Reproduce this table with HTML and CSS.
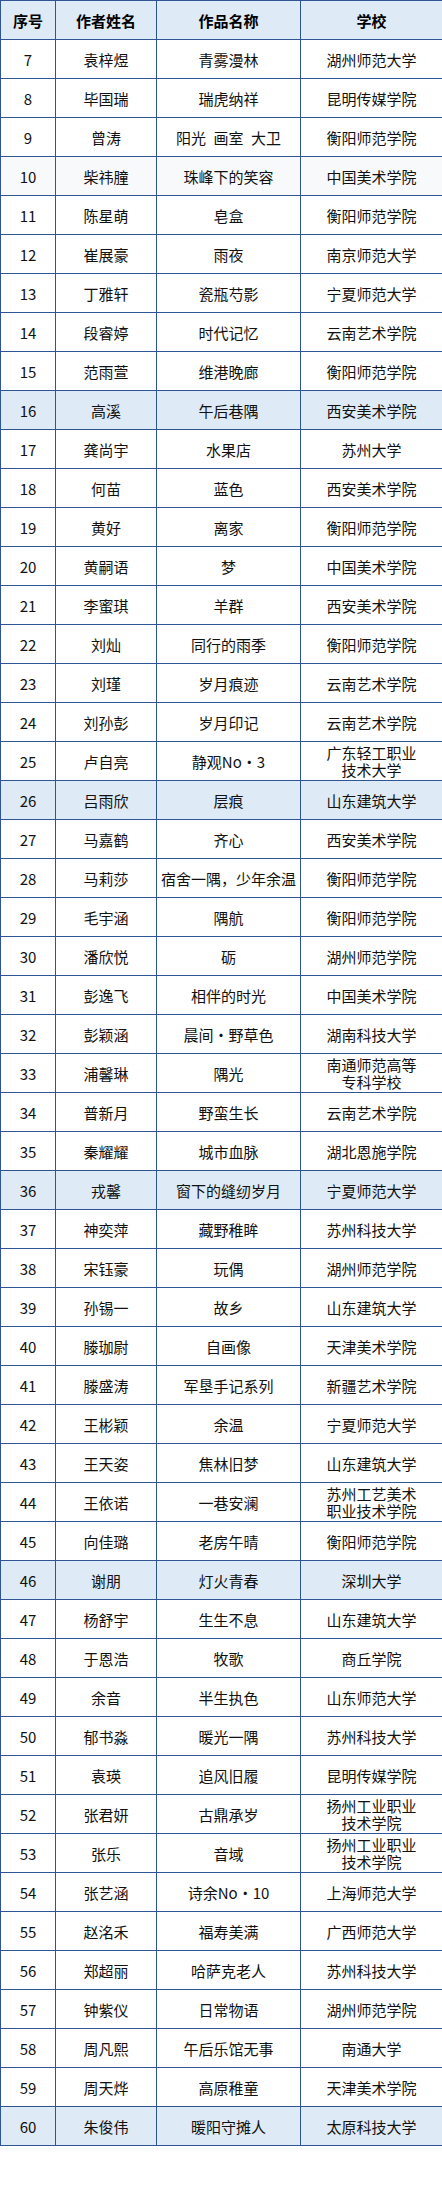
FILE: index.html
```html
<!DOCTYPE html>
<html lang="zh-CN">
<head>
<meta charset="utf-8">
<link rel="stylesheet" href="styles.css">
</head>
<body>
<table class="list">
<colgroup>
<col class="c-no"><col class="c-name"><col class="c-work"><col class="c-school">
</colgroup>
<thead>
<tr class="head"><th>序号</th><th>作者姓名</th><th>作品名称</th><th>学校</th></tr>
</thead>
<tbody>
<tr><td>7</td><td>袁梓煜</td><td>青雾漫林</td><td class="sc">湖州师范大学</td></tr>
<tr><td>8</td><td>毕国瑞</td><td>瑞虎纳祥</td><td class="sc">昆明传媒学院</td></tr>
<tr><td>9</td><td>曾涛</td><td>阳光&ensp;画室&ensp;大卫</td><td class="sc">衡阳师范学院</td></tr>
<tr class="soft"><td>10</td><td>柴祎朣</td><td>珠峰下的笑容</td><td class="sc">中国美术学院</td></tr>
<tr><td>11</td><td>陈星萌</td><td>皂盒</td><td class="sc">衡阳师范学院</td></tr>
<tr><td>12</td><td>崔展豪</td><td>雨夜</td><td class="sc">南京师范大学</td></tr>
<tr><td>13</td><td>丁雅轩</td><td>瓷瓶芍影</td><td class="sc">宁夏师范大学</td></tr>
<tr><td>14</td><td>段睿婷</td><td>时代记忆</td><td class="sc">云南艺术学院</td></tr>
<tr><td>15</td><td>范雨萱</td><td>维港晚廊</td><td class="sc">衡阳师范学院</td></tr>
<tr class="hl"><td>16</td><td>高溪</td><td>午后巷隅</td><td class="sc">西安美术学院</td></tr>
<tr><td>17</td><td>龚尚宇</td><td>水果店</td><td class="sc">苏州大学</td></tr>
<tr><td>18</td><td>何苗</td><td>蓝色</td><td class="sc">西安美术学院</td></tr>
<tr><td>19</td><td>黄好</td><td>离家</td><td class="sc">衡阳师范学院</td></tr>
<tr><td>20</td><td>黄嗣语</td><td>梦</td><td class="sc">中国美术学院</td></tr>
<tr><td>21</td><td>李蜜琪</td><td>羊群</td><td class="sc">西安美术学院</td></tr>
<tr><td>22</td><td>刘灿</td><td>同行的雨季</td><td class="sc">衡阳师范学院</td></tr>
<tr><td>23</td><td>刘瑾</td><td>岁月痕迹</td><td class="sc">云南艺术学院</td></tr>
<tr><td>24</td><td>刘孙彭</td><td>岁月印记</td><td class="sc">云南艺术学院</td></tr>
<tr><td>25</td><td>卢自亮</td><td>静观No・3</td><td class="sc">广东轻工职业技术大学</td></tr>
<tr class="hl"><td>26</td><td>吕雨欣</td><td>层痕</td><td class="sc">山东建筑大学</td></tr>
<tr><td>27</td><td>马嘉鹤</td><td>齐心</td><td class="sc">西安美术学院</td></tr>
<tr><td>28</td><td>马莉莎</td><td>宿舍一隅，少年余温</td><td class="sc">衡阳师范学院</td></tr>
<tr><td>29</td><td>毛宇涵</td><td>隅航</td><td class="sc">衡阳师范学院</td></tr>
<tr><td>30</td><td>潘欣悦</td><td>砺</td><td class="sc">湖州师范学院</td></tr>
<tr><td>31</td><td>彭逸飞</td><td>相伴的时光</td><td class="sc">中国美术学院</td></tr>
<tr><td>32</td><td>彭颖涵</td><td>晨间・野草色</td><td class="sc">湖南科技大学</td></tr>
<tr><td>33</td><td>浦馨琳</td><td>隅光</td><td class="sc">南通师范高等专科学校</td></tr>
<tr><td>34</td><td>普新月</td><td>野蛮生长</td><td class="sc">云南艺术学院</td></tr>
<tr><td>35</td><td>秦耀耀</td><td>城市血脉</td><td class="sc">湖北恩施学院</td></tr>
<tr class="hl"><td>36</td><td>戎馨</td><td>窗下的缝纫岁月</td><td class="sc">宁夏师范大学</td></tr>
<tr><td>37</td><td>神奕萍</td><td>藏野稚眸</td><td class="sc">苏州科技大学</td></tr>
<tr><td>38</td><td>宋钰豪</td><td>玩偶</td><td class="sc">湖州师范学院</td></tr>
<tr><td>39</td><td>孙锡一</td><td>故乡</td><td class="sc">山东建筑大学</td></tr>
<tr><td>40</td><td>滕珈尉</td><td>自画像</td><td class="sc">天津美术学院</td></tr>
<tr><td>41</td><td>滕盛涛</td><td>军垦手记系列</td><td class="sc">新疆艺术学院</td></tr>
<tr><td>42</td><td>王彬颖</td><td>余温</td><td class="sc">宁夏师范大学</td></tr>
<tr><td>43</td><td>王天姿</td><td>焦林旧梦</td><td class="sc">山东建筑大学</td></tr>
<tr><td>44</td><td>王依诺</td><td>一巷安澜</td><td class="sc">苏州工艺美术职业技术学院</td></tr>
<tr><td>45</td><td>向佳璐</td><td>老房午晴</td><td class="sc">衡阳师范学院</td></tr>
<tr class="hl"><td>46</td><td>谢朋</td><td>灯火青春</td><td class="sc">深圳大学</td></tr>
<tr><td>47</td><td>杨舒宇</td><td>生生不息</td><td class="sc">山东建筑大学</td></tr>
<tr><td>48</td><td>于恩浩</td><td>牧歌</td><td class="sc">商丘学院</td></tr>
<tr><td>49</td><td>余音</td><td>半生执色</td><td class="sc">山东师范大学</td></tr>
<tr><td>50</td><td>郁书淼</td><td>暖光一隅</td><td class="sc">苏州科技大学</td></tr>
<tr><td>51</td><td>袁瑛</td><td>追风旧履</td><td class="sc">昆明传媒学院</td></tr>
<tr><td>52</td><td>张君妍</td><td>古鼎承岁</td><td class="sc">扬州工业职业技术学院</td></tr>
<tr><td>53</td><td>张乐</td><td>音域</td><td class="sc">扬州工业职业技术学院</td></tr>
<tr><td>54</td><td>张艺涵</td><td>诗余No・10</td><td class="sc">上海师范大学</td></tr>
<tr><td>55</td><td>赵洺禾</td><td>福寿美满</td><td class="sc">广西师范大学</td></tr>
<tr><td>56</td><td>郑超丽</td><td>哈萨克老人</td><td class="sc">苏州科技大学</td></tr>
<tr><td>57</td><td>钟紫仪</td><td>日常物语</td><td class="sc">湖州师范学院</td></tr>
<tr><td>58</td><td>周凡熙</td><td>午后乐馆无事</td><td class="sc">南通大学</td></tr>
<tr><td>59</td><td>周天烨</td><td>高原稚童</td><td class="sc">天津美术学院</td></tr>
<tr class="hl"><td>60</td><td>朱俊伟</td><td>暖阳守摊人</td><td class="sc">太原科技大学</td></tr>
</tbody>
</table>
</body>
</html>
```

FILE: styles.css
```css
html, body {
  margin: 0;
  padding: 0;
  background: #ffffff;
}

.list {
  border-collapse: collapse;
  table-layout: fixed;
  width: 442px;
  font-family: "Noto Sans CJK SC", "Noto Sans", sans-serif;
  font-size: 15px;
  color: #111111;
}

.c-no { width: 55px; }
.c-name { width: 101px; }
.c-work { width: 144px; }
.c-school { width: 142px; }

.list th,
.list td {
  border: 1px solid #2f5597;
  height: 39px;
  padding: 0 2px;
  text-align: center;
  vertical-align: middle;
  line-height: 17px;
  box-sizing: border-box;
  white-space: nowrap;
}

.list td.sc {
  white-space: normal;
  padding: 0 20px;
}

.list th {
  font-weight: bold;
  color: #000000;
}

.head,
.hl {
  background: #deeaf6;
}

.soft {
  background: #f8f9fa;
}
```
